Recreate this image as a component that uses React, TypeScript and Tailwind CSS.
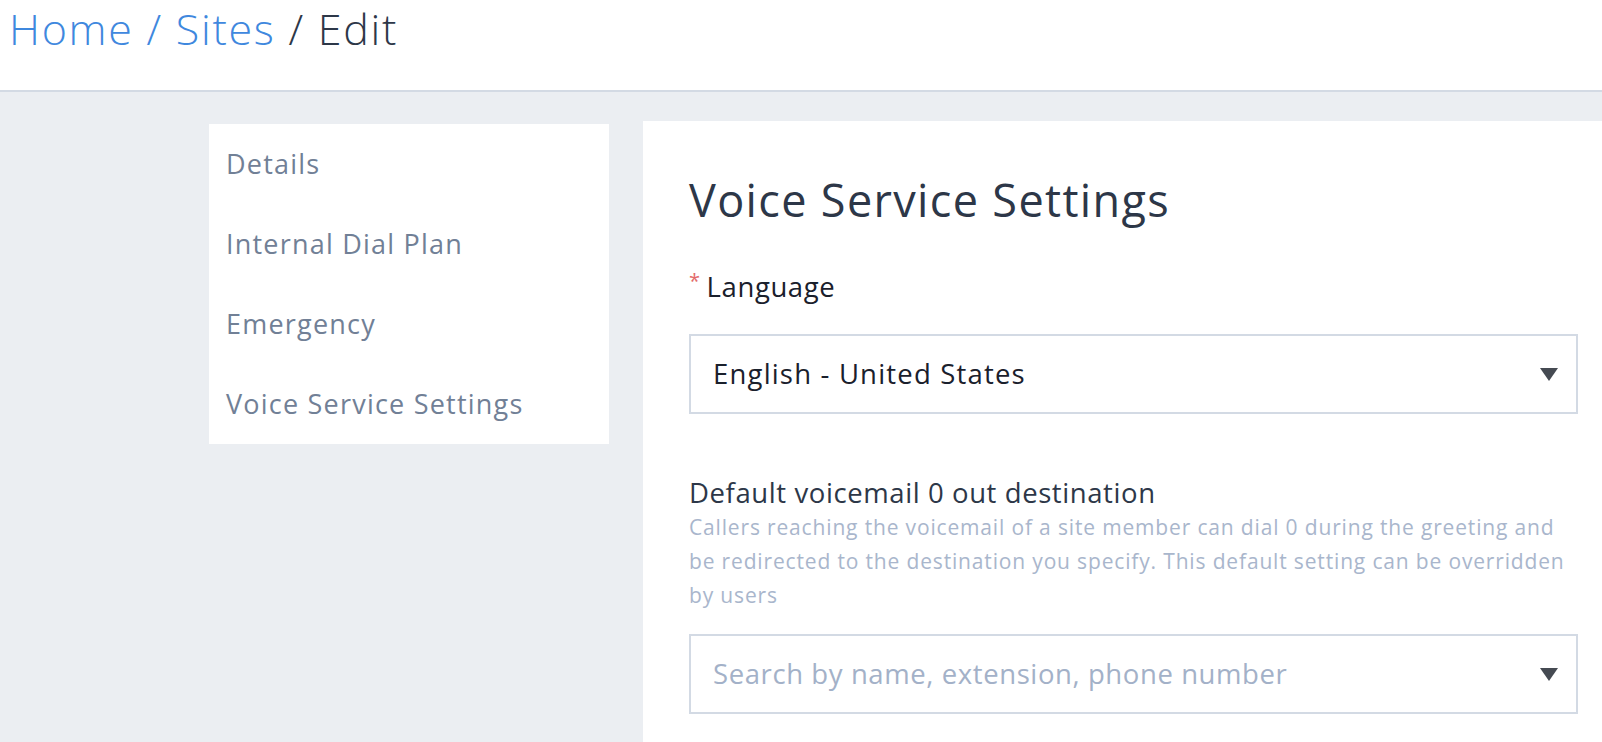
const navItems = ["Details", "Internal Dial Plan", "Emergency", "Voice Service Settings"];

function Caret() {
  return (
    <svg width="18" height="13" viewBox="0 0 18 13" className="shrink-0">
      <path d="M0 0 H18 L9 13 Z" fill="#454a52" />
    </svg>
  );
}

export default function App() {
  return (
    <div className="flex h-[742px] flex-col overflow-hidden bg-[#ebeef2] font-['Open_Sans',sans-serif] tracking-[0.037em]">
      <header className="h-[92px] shrink-0 border-b-2 border-[#d3dae4] bg-white pl-[9px] pt-[1px]">
        <h1 className="text-[43px] leading-[56px] font-light tracking-[0.04em]">
          <span className="text-[#3f88de]">Home / Sites</span>
          <span className="text-[#2d3748]"> / Edit</span>
        </h1>
      </header>

      <div className="flex flex-1 gap-[34px] pl-[209px] pt-[29px]">
        <nav className="mt-[3px] flex h-[320px] w-[400px] shrink-0 flex-col bg-white">
          {navItems.map((item) => (
            <a key={item} className="flex h-[80px] items-center px-[17px] text-[27px] tracking-[0.045em] text-[#718096]">
              {item}
            </a>
          ))}
        </nav>

        <main className="flex-1 bg-white pl-[46px] pr-[24px] pt-[51px]">
          <h2 className="text-[45px] leading-[56px] font-medium tracking-[0.03em] text-[#2d3748]">
            Voice Service Settings
          </h2>

          <label className="mt-[41px] flex items-start gap-[6px] text-[27.5px] leading-[36px] text-[#1a202c]">
            <span className="mt-[2px] text-[20px] leading-[20px] text-[#e36a6a]">*</span>
            Language
          </label>
          <div className="mt-[29px] flex h-[80px] items-center justify-between border-2 border-[#d3dae4] pl-[22px] pr-[18px] text-[27.5px] text-[#1a202c]">
            <span className="tracking-[0.043em]">English - United States</span>
            <Caret />
          </div>

          <div className="mt-[61px] text-[27.5px] leading-[36px] text-[#2d3748]">Default voicemail 0 out destination</div>
          <p className="mt-[-1px] w-[889px] text-[21px] leading-[34px] tracking-[0.04em] text-[#a9b6cc]">
            Callers reaching the voicemail of a site member can dial 0 during the greeting and be redirected to the
            destination you specify. This default setting can be overridden by users
          </p>
          <div className="mt-[22px] flex h-[80px] items-center justify-between border-2 border-[#d3dae4] pl-[22px] pr-[18px] text-[27.5px] text-[#a3b1c8]">
            <span>Search by name, extension, phone number</span>
            <Caret />
          </div>
        </main>
      </div>
    </div>
  );
}
